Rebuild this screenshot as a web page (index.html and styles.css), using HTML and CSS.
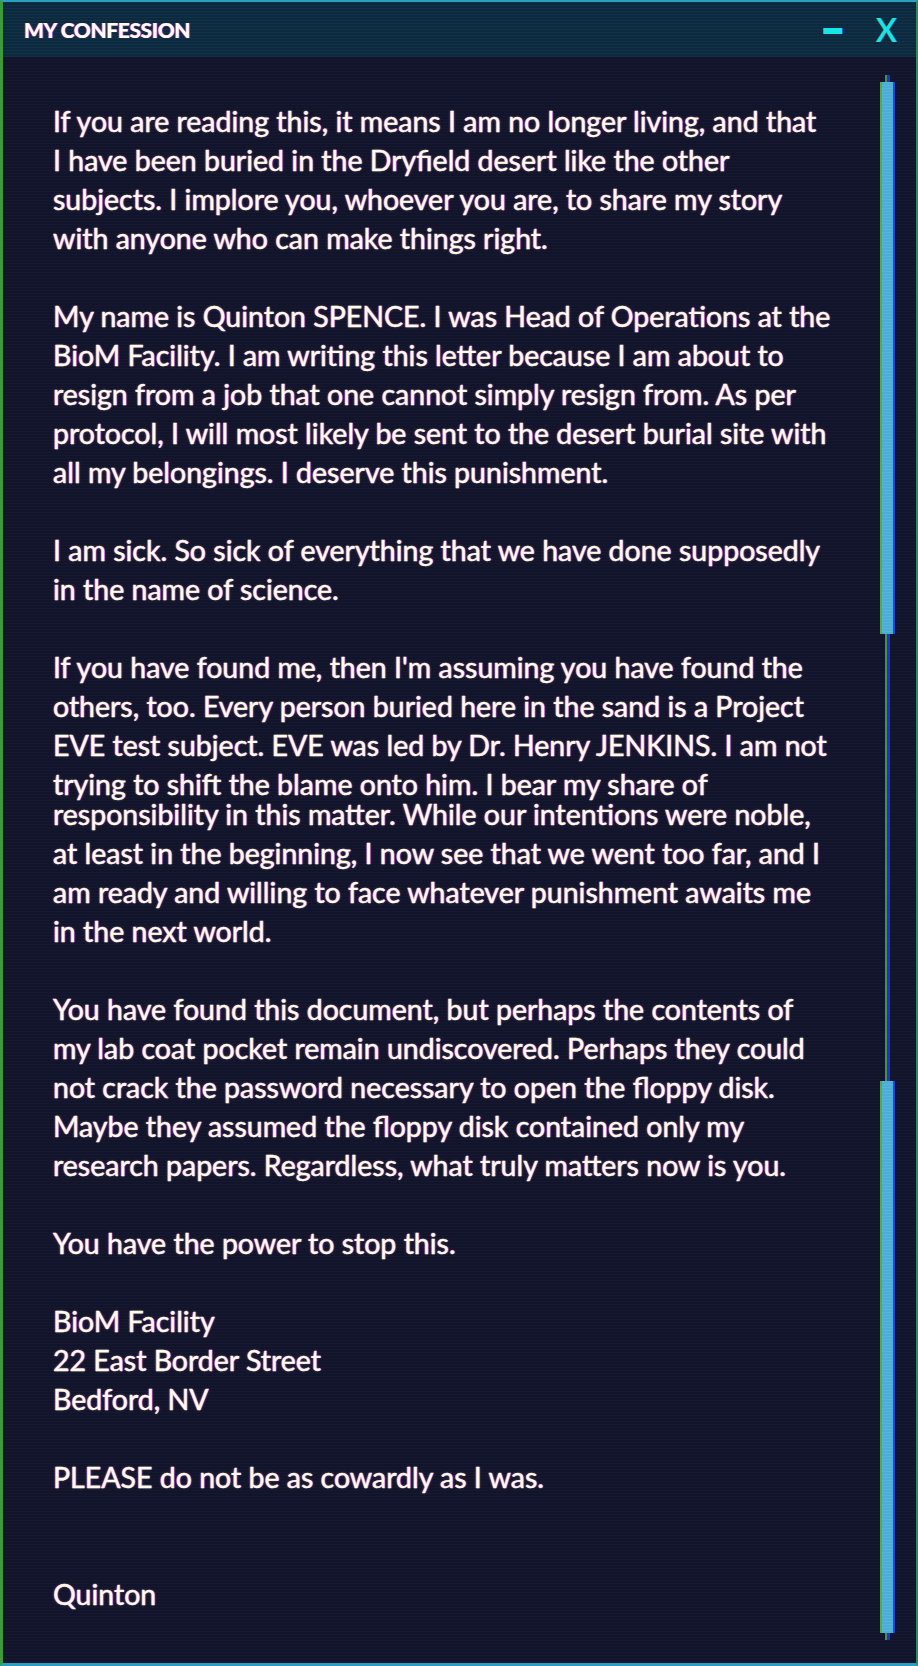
FILE: index.html
```html
<!DOCTYPE html>
<html lang="en">
<head>
<meta charset="utf-8">
<title>My Confession</title>
<link rel="stylesheet" href="styles.css">
</head>
<body>
<div class="window">
  <header class="titlebar">
    <h1 class="title">MY CONFESSION</h1>
    <div class="controls">
      <span class="btn-min" aria-label="minimize"></span>
      <span class="btn-close">X</span>
    </div>
  </header>
  <div class="content">
    <div class="letter">
      <p>If you are reading this, it means I am no longer living, and that<br>I have been buried in the Dryfield desert like the other<br>subjects. I implore you, whoever you are, to share my story<br>with anyone who can make things right.</p>
      <p>My name is Quinton SPENCE. I was Head of Operations at the<br>BioM Facility. I am writing this letter because I am about to<br>resign from a job that one cannot simply resign from. As per<br>protocol, I will most likely be sent to the desert burial site with<br>all my belongings. I deserve this punishment.</p>
      <p>I am sick. So sick of everything that we have done supposedly<br>in the name of science.</p>
      <p>If you have found me, then I'm assuming you have found the<br>others, too. Every person buried here in the sand is a Project<br>EVE test subject. EVE was led by Dr. Henry JENKINS. I am not<br>trying to shift the blame onto him. I bear my share of</p>
      <p class="cont">responsibility in this matter. While our intentions were noble,<br>at least in the beginning, I now see that we went too far, and I<br>am ready and willing to face whatever punishment awaits me<br>in the next world.</p>
      <p>You have found this document, but perhaps the contents of<br>my lab coat pocket remain undiscovered. Perhaps they could<br>not crack the password necessary to open the floppy disk.<br>Maybe they assumed the floppy disk contained only my<br>research papers. Regardless, what truly matters now is you.</p>
      <p>You have the power to stop this.</p>
      <p>BioM Facility<br>22 East Border Street<br>Bedford, NV</p>
      <p>PLEASE do not be as cowardly as I was.</p>
      <p class="sign">Quinton</p>
    </div>
    <div class="scrollbar">
      <span class="stub"></span>
      <span class="thumb"></span>
      <span class="track"></span>
      <span class="thumb"></span>
      <span class="stub"></span>
    </div>
  </div>
</div>
</body>
</html>
```
FILE: styles.css
```css
html, body {
  margin: 0;
  padding: 0;
  background: #11142a;
}

.window {
  width: 918px;
  height: 1666px;
  box-sizing: border-box;
  display: flex;
  flex-direction: column;
  background-color: #11142a;
  background-image: repeating-linear-gradient(to bottom, rgba(255,255,255,0.018) 0 1px, rgba(0,0,0,0) 1px 3px);
  border-top: 2px solid #2a9fc0;
  border-bottom: 3px solid #2a9fc0;
  border-left: 3px solid #3d9a3a;
  border-right: 2px solid #2f8a5a;
  overflow: hidden;
}

.titlebar {
  height: 55px;
  flex: none;
  display: flex;
  align-items: center;
  justify-content: space-between;
  padding: 0 19px 0 21px;
  background-color: #0c2a3f;
  background-image: repeating-linear-gradient(to bottom, rgba(255,255,255,0.03) 0 1px, rgba(0,0,0,0) 1px 3px);
}

.title {
  margin: 0;
  font-family: "Lato", "Open Sans", sans-serif;
  font-weight: 900;
  font-size: 21px;
  letter-spacing: -0.4px;
  color: #fffdf2;
  text-shadow: -1px 0 rgba(255, 60, 90, 0.75), 1px 0 rgba(70, 70, 255, 0.9);
}

.controls {
  display: flex;
  align-items: center;
  gap: 34px;
}

.btn-min {
  display: block;
  width: 18px;
  height: 6px;
  margin-top: 3px;
  background: #18e6e6;
  box-shadow: -1px 0 0 rgba(60, 220, 90, 0.8), 1px 0 0 rgba(40, 90, 255, 0.8);
}

.btn-close {
  font-family: "Lato", "Open Sans", sans-serif;
  font-weight: 400;
  font-size: 32px;
  line-height: 1;
  color: #18e6e6;
  text-shadow: -1px 0 rgba(60, 220, 90, 0.8), 1px 0 rgba(40, 90, 255, 0.8);
}

.content {
  flex: 1;
  display: flex;
  min-height: 0;
}

.letter {
  flex: 1;
  padding: 45px 0 0 50px;
  font-family: "Lato", "Open Sans", sans-serif;
  font-size: 28.5px;
  line-height: 39px;
  color: #fffbe8;
  -webkit-text-stroke: 0.3px #fffbe8;
  text-shadow: -1px 0 rgba(255, 50, 70, 0.65), 1px 0 rgba(60, 60, 255, 0.85), 0 0 3px rgba(255, 255, 230, 0.25);
  white-space: nowrap;
}

.letter p {
  margin: 0 0 39px;
}

.letter p.cont {
  margin-top: -48px;
}

.letter p.sign {
  margin-top: 78px;
}

.scrollbar {
  flex: none;
  width: 15px;
  margin: 18px 21px 23px 0;
  display: flex;
  flex-direction: column;
  align-items: center;
}

.scrollbar .stub {
  flex: none;
  width: 5px;
  height: 7px;
  box-sizing: border-box;
  border-left: 2px solid #3a9a3a;
  background: #2030e0;
}

.scrollbar .track {
  flex: 1;
  width: 5px;
  box-sizing: border-box;
  border-left: 2px solid #3a9a3a;
  background: #2030e0;
}

.scrollbar .thumb {
  flex: none;
  width: 15px;
  height: 552px;
  box-sizing: border-box;
  border-left: 2px solid #5aa84a;
  border-right: 2px solid #2a40e0;
  background-color: #4aaed6;
  background-image: repeating-linear-gradient(to bottom, rgba(255,255,255,0.08) 0 1px, rgba(0,0,0,0) 1px 3px);
}
```
